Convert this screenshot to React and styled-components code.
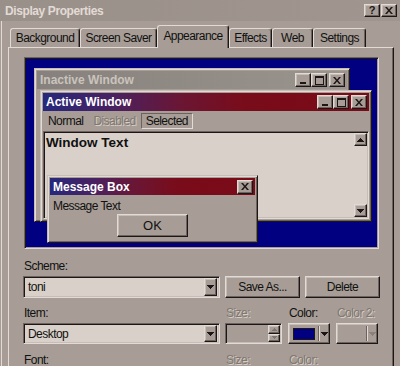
import React from 'react';
import styled, { createGlobalStyle, css } from 'styled-components';

const C = {
    face: '#a79d96',
    light: '#e2dad4',
    soft: '#c6bdb6',
    shadow: '#6c635e',
    dark: '#1c1716',
    field: '#d8d0c9',
    navy: '#000080',
    text: '#111',
};

const GlobalStyle = createGlobalStyle`
    *, *::before, *::after { box-sizing: border-box; }
    body {
        margin: 0;
        background: ${C.face};
        font-family: "Liberation Sans", Arial, sans-serif;
        font-size: 12px;
        letter-spacing: -0.55px;
        color: ${C.text};
        overflow: hidden;
    }
`;

const raised = css`
    border: 1px solid;
    border-color: ${C.light} ${C.dark} ${C.dark} ${C.light};
    box-shadow: inset -1px -1px 0 ${C.shadow}, inset 1px 1px 0 ${C.soft};
    background: ${C.face};
`;

const sunken = css`
    border: 1px solid;
    border-color: ${C.shadow} ${C.light} ${C.light} ${C.shadow};
    box-shadow: inset 1px 1px 0 ${C.dark}, inset -1px -1px 0 ${C.soft};
`;

const disabledText = css`
    color: #80776f;
    text-shadow: 1px 1px 0 #d6cec8;
`;

const Dialog = styled.div`
    width: 400px;
    height: 366px;
    overflow: hidden;
    display: flex;
    flex-direction: column;
    background: ${C.face};
    box-shadow: inset 1px 0 0 ${C.face}, inset 2px 0 0 ${C.light};
`;

const TitleBar = styled.div`
    height: 21px;
    flex-shrink: 0;
    display: flex;
    align-items: center;
    padding: 0 3px 0 5px;
    background: linear-gradient(90deg, #9a908a, #a0968f);
`;

const TitleText = styled.span`
    flex: 1;
    font-weight: bold;
    font-size: 12px;
    letter-spacing: -0.4px;
    color: #e2dbd5;
`;

const CapButton = styled.div`
    width: 16px;
    height: 13px;
    ${raised};
    margin-left: ${p => p.$gap || 0}px;
    display: flex;
    align-items: center;
    justify-content: center;
    font-weight: bold;
    font-size: 11px;
    letter-spacing: 0;
    line-height: 1;
    color: ${C.dark};
`;

const TabStrip = styled.div`
    height: 22px;
    margin-top: 4px;
    flex-shrink: 0;
    display: flex;
    align-items: flex-end;
    padding-left: 10px;
    position: relative;
    z-index: 1;
`;

const Tab = styled.div`
    width: ${p => p.$w}px;
    height: ${p => (p.$active ? 23 : 19)}px;
    margin-bottom: ${p => (p.$active ? -1 : 0)}px;
    padding-bottom: ${p => (p.$active ? 2 : 0)}px;
    background: ${C.face};
    border-top: 1px solid ${C.light};
    border-left: 1px solid ${C.light};
    border-right: 1px solid ${C.dark};
    border-radius: 3px 3px 0 0;
    box-shadow: inset -1px 0 0 ${C.shadow};
    display: flex;
    align-items: center;
    justify-content: center;
`;

const Panel = styled.div`
    flex: 1;
    margin-left: 8px;
    width: 386px;
    border-top: 1px solid ${C.light};
    border-left: 1px solid ${C.light};
    border-right: 1px solid ${C.dark};
    box-shadow: inset -1px 0 0 ${C.shadow};
    padding: 9px 0 0 15px;
`;

const Preview = styled.div`
    position: relative;
    width: 355px;
    height: 192px;
    border: 1px solid;
    border-color: ${C.shadow} ${C.light} ${C.light} ${C.shadow};
    box-shadow: inset 1px 1px 0 ${C.dark}, inset -1px -1px 0 ${C.face};
    background: ${C.navy};
`;

const Win = styled.div`
    position: absolute;
    left: ${p => p.$x}px;
    top: ${p => p.$y}px;
    width: ${p => p.$w}px;
    height: ${p => p.$h}px;
    background: ${C.face};
    border: 1px solid;
    border-color: ${C.soft} ${C.dark} ${C.dark} ${C.soft};
    box-shadow: inset 1px 1px 0 ${C.light}, inset -1px -1px 0 ${C.shadow};
    padding: 2px;
    display: flex;
    flex-direction: column;
`;

const Caption = styled.div`
    height: ${p => p.$h || 18}px;
    flex-shrink: 0;
    display: flex;
    align-items: center;
    padding: 0 2px 0 3px;
    font-weight: bold;
    font-size: 12px;
    letter-spacing: 0;
    color: ${p => (p.$active ? '#fff' : '#cac3bd')};
    background: ${p => (p.$active
        ? 'linear-gradient(90deg, #26287c 0%, #4a2160 22%, #6a1634 42%, #790c1a 62%, #7a0a16 100%)'
        : 'linear-gradient(90deg, #86817c 0%, #938d88 60%, #9a948f 100%)')};
`;

const CaptionText = styled.span`
    flex: 1;
`;

const WinButton = styled.div`
    width: 16px;
    height: 14px;
    ${raised};
    margin-left: ${p => p.$gap || 0}px;
    display: flex;
    align-items: center;
    justify-content: center;
`;

const MenuBar = styled.div`
    height: 20px;
    flex-shrink: 0;
    display: flex;
    align-items: flex-start;
    padding-top: 2px;
`;

const MenuItem = styled.span`
    padding: 0 4px;
    line-height: 14px;
    border: 1px solid transparent;
    ${p => p.$disabled && disabledText}
    ${p => p.$selected && css`
        border-color: ${C.shadow} ${C.light} ${C.light} ${C.shadow};
    `}
`;

const TextArea = styled.div`
    flex: 1;
    display: flex;
    ${sunken};
    background: ${C.field};
`;

const WindowText = styled.div`
    flex: 1;
    padding: 3px 0 0 2px;
    font-weight: bold;
    font-size: 13.5px;
    letter-spacing: 0;
`;

const ScrollCol = styled.div`
    width: 15px;
    display: flex;
    flex-direction: column;
    justify-content: space-between;
    padding: 1px;
`;

const ScrollButton = styled.div`
    width: 13px;
    height: 13px;
    ${raised};
    display: flex;
    align-items: center;
    justify-content: center;
`;

const MsgBody = styled.div`
    flex: 1;
    display: flex;
    flex-direction: column;
    padding: 4px 3px 0;
`;

const MsgText = styled.div`
    line-height: 14px;
`;

const OkButton = styled.div`
    align-self: center;
    width: 71px;
    height: 23px;
    margin-top: 1px;
    ${raised};
    display: flex;
    align-items: center;
    justify-content: center;
    font-size: 13px;
    letter-spacing: 0;
`;

const Controls = styled.div`
    display: flex;
    flex-direction: column;
    margin-left: -1px;
`;

const Row = styled.div`
    display: flex;
    align-items: flex-end;
    margin-top: ${p => p.$mt}px;
`;

const Field = styled.div`
    display: flex;
    flex-direction: column;
    width: ${p => p.$w}px;
    margin-left: ${p => p.$ml || 0}px;
`;

const Label = styled.div`
    height: 14px;
    line-height: 14px;
    padding-left: 1px;
    margin-bottom: 3px;
    white-space: nowrap;
    ${p => p.$disabled && disabledText}
`;

const Combo = styled.div`
    height: ${p => p.$h}px;
    display: flex;
    align-items: stretch;
    padding: 1px 2px 1px 4px;
    ${sunken};
    background: ${C.field};
`;

const ComboValue = styled.span`
    flex: 1;
    display: flex;
    align-items: center;
`;

const DropButton = styled.div`
    width: 13px;
    ${raised};
    display: flex;
    align-items: center;
    justify-content: center;
`;

const PushButton = styled.div`
    width: 75px;
    height: 22px;
    margin-left: ${p => p.$ml || 0}px;
    ${raised};
    display: flex;
    align-items: center;
    justify-content: center;
`;

const Spinner = styled.div`
    height: 21px;
    display: flex;
    justify-content: flex-end;
    padding: 1px;
    ${sunken};
    background: ${C.face};
`;

const SpinArrows = styled.div`
    width: 12px;
    display: flex;
    flex-direction: column;
`;

const SpinArrow = styled.div`
    flex: 1;
    ${raised};
    display: flex;
    align-items: center;
    justify-content: center;
`;

const ColorButton = styled.div`
    height: 21px;
    display: flex;
    align-items: center;
    padding-left: 4px;
    ${raised};
`;

const Swatch = styled.div`
    width: 22px;
    height: 12px;
    border: 1px solid ${p => (p.$color ? C.dark : 'transparent')};
    background: ${p => p.$color || 'transparent'};
`;

const Divider = styled.div`
    width: 2px;
    height: 15px;
    margin-left: 3px;
    border-left: 1px solid ${C.shadow};
    border-right: 1px solid ${C.light};
`;

const ArrowSlot = styled.div`
    flex: 1;
    display: flex;
    justify-content: center;
`;

const Down = ({ color = C.dark }) => (
    <svg width="7" height="4" viewBox="0 0 7 4">
        <path d="M0 0h7v1H0zM1 1h5v1H1zM2 2h3v1H2zM3 3h1v1H3z" fill={color} />
    </svg>
);

const Up = ({ color = C.dark }) => (
    <svg width="7" height="4" viewBox="0 0 7 4">
        <path d="M3 0h1v1H3zM2 1h3v1H2zM1 2h5v1H1zM0 3h7v1H0z" fill={color} />
    </svg>
);

const SmallUp = () => (
    <svg width="5" height="3" viewBox="0 0 5 3">
        <path d="M2 0h1v1H2zM1 1h3v1H1zM0 2h5v1H0z" fill="#7e756f" />
    </svg>
);

const SmallDown = () => (
    <svg width="5" height="3" viewBox="0 0 5 3">
        <path d="M0 0h5v1H0zM1 1h3v1H1zM2 2h1v1H2z" fill="#7e756f" />
    </svg>
);

const MinGlyph = () => (
    <svg width="8" height="8" viewBox="0 0 8 8">
        <path d="M1 6h6v2H1z" fill={C.dark} />
    </svg>
);

const MaxGlyph = () => (
    <svg width="9" height="9" viewBox="0 0 9 9">
        <path d="M0 0h9v9H0zM1 2v6h7V2z" fill={C.dark} fillRule="evenodd" />
    </svg>
);

const CloseGlyph = () => (
    <svg width="8" height="7" viewBox="0 0 8 7">
        <path d="M0 0h2l2 2.4L6 0h2L5 3.5 8 7H6L4 4.6 2 7H0l3-3.5z" fill={C.dark} />
    </svg>
);

const CaptionButtons = ({ full = true }) => (
    <>
        {full && <WinButton><MinGlyph /></WinButton>}
        {full && <WinButton><MaxGlyph /></WinButton>}
        <WinButton $gap={full ? 2 : 0}><CloseGlyph /></WinButton>
    </>
);

const tabs = [
    ['Background', 70],
    ['Screen Saver', 77],
    ['Appearance', 72, true],
    ['Effects', 43],
    ['Web', 41],
    ['Settings', 53],
];

export default function App() {
    return (
        <Dialog>
            <GlobalStyle />
            <TitleBar>
                <TitleText>Display Properties</TitleText>
                <CapButton>?</CapButton>
                <CapButton $gap={1}><CloseGlyph /></CapButton>
            </TitleBar>

            <TabStrip>
                {tabs.map(([name, w, active]) => (
                    <Tab key={name} $w={w} $active={active}>{name}</Tab>
                ))}
            </TabStrip>

            <Panel>
                <Preview>
                    <Win $x={9} $y={10} $w={316} $h={154}>
                        <Caption>
                            <CaptionText>Inactive Window</CaptionText>
                            <CaptionButtons />
                        </Caption>
                    </Win>

                    <Win $x={15} $y={32} $w={332} $h={132}>
                        <Caption $active>
                            <CaptionText>Active Window</CaptionText>
                            <CaptionButtons />
                        </Caption>
                        <MenuBar>
                            <MenuItem>Normal</MenuItem>
                            <MenuItem $disabled>Disabled</MenuItem>
                            <MenuItem $selected>Selected</MenuItem>
                        </MenuBar>
                        <TextArea>
                            <WindowText>Window Text</WindowText>
                            <ScrollCol>
                                <ScrollButton><Up /></ScrollButton>
                                <ScrollButton><Down /></ScrollButton>
                            </ScrollCol>
                        </TextArea>
                    </Win>

                    <Win $x={22} $y={117} $w={211} $h={68}>
                        <Caption $active $h={17}>
                            <CaptionText>Message Box</CaptionText>
                            <CaptionButtons full={false} />
                        </Caption>
                        <MsgBody>
                            <MsgText>Message Text</MsgText>
                            <OkButton>OK</OkButton>
                        </MsgBody>
                    </Win>
                </Preview>

                <Controls>
                    <Row $mt={10}>
                        <Field $w={197}>
                            <Label>Scheme:</Label>
                            <Combo $h={22}>
                                <ComboValue>toni</ComboValue>
                                <DropButton><Down /></DropButton>
                            </Combo>
                        </Field>
                        <PushButton $ml={5}>Save As...</PushButton>
                        <PushButton $ml={5}>Delete</PushButton>
                    </Row>

                    <Row $mt={8}>
                        <Field $w={197}>
                            <Label>Item:</Label>
                            <Combo $h={21}>
                                <ComboValue>Desktop</ComboValue>
                                <DropButton><Down /></DropButton>
                            </Combo>
                        </Field>
                        <Field $w={57} $ml={5}>
                            <Label $disabled>Size:</Label>
                            <Spinner>
                                <SpinArrows>
                                    <SpinArrow><SmallUp /></SpinArrow>
                                    <SpinArrow><SmallDown /></SpinArrow>
                                </SpinArrows>
                            </Spinner>
                        </Field>
                        <Field $w={42} $ml={6}>
                            <Label>Color:</Label>
                            <ColorButton>
                                <Swatch $color={C.navy} />
                                <Divider />
                                <ArrowSlot><Down /></ArrowSlot>
                            </ColorButton>
                        </Field>
                        <Field $w={42} $ml={6}>
                            <Label $disabled>Color 2:</Label>
                            <ColorButton>
                                <Swatch />
                                <Divider />
                                <ArrowSlot><Down color="#8a817b" /></ArrowSlot>
                            </ColorButton>
                        </Field>
                    </Row>

                    <Row $mt={9}>
                        <Field $w={197}>
                            <Label>Font:</Label>
                        </Field>
                        <Field $w={57} $ml={5}>
                            <Label $disabled>Size:</Label>
                        </Field>
                        <Field $w={42} $ml={6}>
                            <Label $disabled>Color:</Label>
                        </Field>
                    </Row>
                </Controls>
            </Panel>
        </Dialog>
    );
}
